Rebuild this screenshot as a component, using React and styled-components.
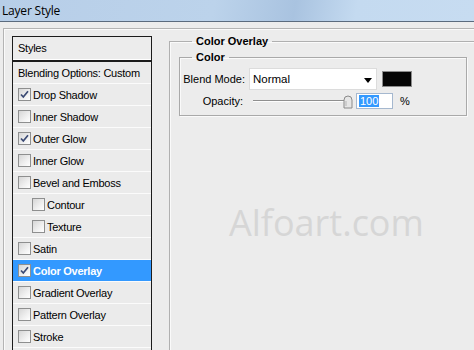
import React from 'react';
import styled, { createGlobalStyle } from 'styled-components';

const GlobalStyle = createGlobalStyle`
  html, body {
    margin: 0;
    padding: 0;
    background: #ececec;
  }
  body {
    font-family: "Liberation Sans", Arial, sans-serif;
    font-size: 11px;
    color: #000;
  }
`;

const STYLE_ITEMS = [
  { label: 'Drop Shadow', checked: true },
  { label: 'Inner Shadow' },
  { label: 'Outer Glow', checked: true },
  { label: 'Inner Glow' },
  { label: 'Bevel and Emboss' },
  { label: 'Contour', indent: true },
  { label: 'Texture', indent: true },
  { label: 'Satin' },
  { label: 'Color Overlay', checked: true, selected: true },
  { label: 'Gradient Overlay' },
  { label: 'Pattern Overlay' },
  { label: 'Stroke' },
];

const Window = styled.div`
  width: 474px;
  height: 350px;
  overflow: hidden;
  display: flex;
  flex-direction: column;
  background: #ececec;
`;

const TitleBar = styled.div`
  height: 21px;
  flex: none;
  display: flex;
  align-items: center;
  padding-left: 2px;
  background: linear-gradient(100deg, #b7cee8 0%, #bcd3eb 45%, #a9c3e0 62%, #c4daf0 75%, #c7dcf1 100%);
  border-bottom: 1px solid #5b6b7e;
  font-family: "Open Sans", "Liberation Sans", sans-serif;
  font-size: 12px;
  letter-spacing: -0.2px;
`;

const Body = styled.div`
  flex: 1;
  display: flex;
  margin: 6px 0 0 3px;
  border-top: 1px solid #b4b4b4;
  border-left: 1px solid #b4b4b4;
  box-shadow: inset 1px 1px 0 #fafafa;
  min-height: 0;
`;

const StyleList = styled.div`
  width: 140px;
  flex: none;
  box-sizing: border-box;
  margin: 7px 0 0 8px;
  border: 1px solid #1c1c1c;
  border-bottom: none;
  display: flex;
  flex-direction: column;
  letter-spacing: -0.25px;
`;

const ListHeader = styled.div`
  height: 22px;
  flex: none;
  display: flex;
  align-items: center;
  padding-left: 5px;
  border-bottom: 1px solid #fff;
  box-shadow: 0 1px 0 #1c1c1c, 0 2px 0 #1c1c1c;
  margin-bottom: 2px;
`;

const Row = styled.div`
  height: 21px;
  flex: none;
  display: flex;
  align-items: center;
  gap: 2px;
  padding-left: ${(p) => (p.$indent ? 19 : 5)}px;
  border-bottom: 1px solid #fbfbfb;
  background: ${(p) => (p.$selected ? '#3399ff' : '#ebebeb')};
  color: ${(p) => (p.$selected ? '#fff' : '#000')};
  font-weight: ${(p) => (p.$selected ? 'bold' : 'normal')};
  white-space: nowrap;
`;

const Box = styled.span`
  width: 11px;
  height: 11px;
  flex: none;
  display: inline-flex;
  align-items: center;
  justify-content: center;
  border: 1px solid #8e8f8f;
  background: linear-gradient(135deg, #d6d6d6 0%, #f0f0f0 60%, #ffffff 100%);
`;

const CheckBox = ({ checked }) => (
  <Box>
    {checked && (
      <svg width="9" height="9" viewBox="0 0 9 9">
        <path d="M1 4.5 L3.3 7 L8 1.2" fill="none" stroke="#3b4a74" strokeWidth="1.7" />
      </svg>
    )}
  </Box>
);

const Options = styled.fieldset`
  flex: 1;
  margin: 5px -20px 0 17px;
  padding: 2px 0 0 9px;
  border: 1px solid #b0b0b0;
  border-right: none;
  border-bottom: none;
  box-shadow: inset 1px 1px 0 #fafafa;
  min-width: 0;
`;

const Legend = styled.legend`
  font-weight: bold;
  line-height: 14px;
  padding: 0 4px;
  margin-left: ${(p) => p.$offset}px;
`;

const Group = styled.fieldset`
  width: 288px;
  box-sizing: border-box;
  margin: 0;
  padding: 4px 0 6px 0;
  border: 1px solid #a9a9a9;
  box-shadow: inset 1px 1px 0 #fafafa, 1px 1px 0 #fafafa;
`;

const FieldGrid = styled.div`
  display: grid;
  grid-template-columns: 65px auto;
  column-gap: 4px;
  row-gap: 3px;
  align-items: center;
`;

const Label = styled.span`
  text-align: right;
  padding-right: ${(p) => p.$pad || 0}px;
`;

const Line = styled.div`
  display: flex;
  align-items: center;
`;

const Select = styled.div`
  width: 128px;
  height: 22px;
  box-sizing: border-box;
  display: flex;
  align-items: center;
  justify-content: space-between;
  padding: 0 4px 0 3px;
  background: #fff;
  border: 1px solid #dcdcdc;
  font-size: 11.5px;
`;

const Arrow = styled.span`
  width: 0;
  height: 0;
  border-left: 4px solid transparent;
  border-right: 4px solid transparent;
  border-top: 5px solid #000;
  margin-top: 2px;
`;

const Swatch = styled.div`
  width: 30px;
  height: 16px;
  box-sizing: border-box;
  margin-left: 5px;
  background: #060606;
  border: 1px solid #8c8c8c;
`;

const Slider = styled.div`
  width: 104px;
  height: 16px;
  display: flex;
  align-items: center;
  padding-left: 4px;
  box-sizing: border-box;
`;

const Track = styled.div`
  flex: 1;
  height: 1px;
  background: #8f8f8f;
  border-bottom: 1px solid #fdfdfd;
`;

const Thumb = styled.svg`
  flex: none;
  margin-left: -2px;
  margin-top: 1px;
`;

const NumberBox = styled.div`
  width: 37px;
  height: 16px;
  box-sizing: border-box;
  margin-left: 3px;
  padding: 1px 0 0 2px;
  background: #fff;
  border: 1px solid #a5b8cf;
  line-height: 12px;
`;

const Selected = styled.span`
  background: #3399ff;
  color: #fff;
  padding: 0 1px;
`;

const Percent = styled.span`
  margin-left: 7px;
`;

const Watermark = styled.div`
  margin: 87px 0 0 50px;
  font-family: "Open Sans", "DejaVu Sans", sans-serif;
  font-size: 36px;
  line-height: 40px;
  color: #d6d6d6;
`;

export default function App() {
  return (
    <>
      <GlobalStyle />
      <Window>
        <TitleBar>Layer Style</TitleBar>
        <Body>
          <StyleList>
            <ListHeader>Styles</ListHeader>
            <Row>Blending Options: Custom</Row>
            {STYLE_ITEMS.map((item) => (
              <Row key={item.label} $indent={item.indent} $selected={item.selected}>
                <CheckBox checked={item.checked} />
                {item.label}
              </Row>
            ))}
            <Row />
          </StyleList>
          <Options>
            <Legend $offset={13}>Color Overlay</Legend>
            <Group>
              <Legend $offset={12}>Color</Legend>
              <FieldGrid>
                <Label>Blend Mode:</Label>
                <Line>
                  <Select>
                    Normal
                    <Arrow />
                  </Select>
                  <Swatch />
                </Line>
                <Label $pad={2}>Opacity:</Label>
                <Line>
                  <Slider>
                    <Track />
                    <Thumb width="10" height="14" viewBox="0 0 10 14">
                      <path
                        d="M1 5 Q1 1 5 1 Q9 1 9 5 L9 13 L1 13 Z"
                        fill="#e6e6e6"
                        stroke="#8a8a8a"
                      />
                      <path d="M3 6 L3 11" stroke="#b5b5b5" />
                    </Thumb>
                  </Slider>
                  <NumberBox>
                    <Selected>100</Selected>
                  </NumberBox>
                  <Percent>%</Percent>
                </Line>
              </FieldGrid>
            </Group>
            <Watermark>Alfoart.com</Watermark>
          </Options>
        </Body>
      </Window>
    </>
  );
}
